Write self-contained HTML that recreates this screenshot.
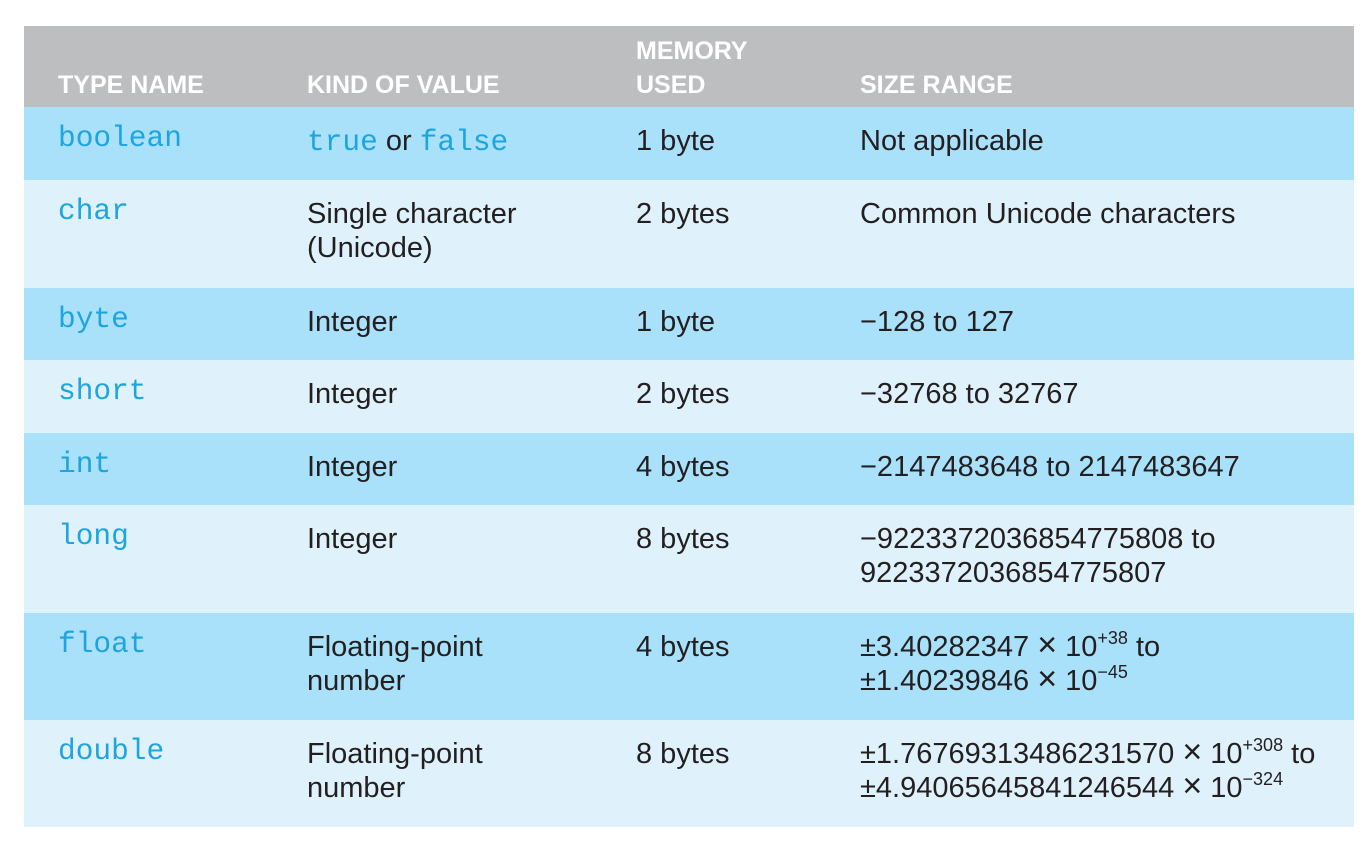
<!DOCTYPE html>
<html><head><meta charset="utf-8"><style>
body{margin:0;width:1368px;height:846px;background:#fff;position:relative;font-family:"Liberation Sans",sans-serif;color:#231f20;overflow:hidden}
.r{position:absolute;left:24px;width:1330px}
.c{position:absolute;font-size:29px;line-height:34px;white-space:nowrap}
.h{position:absolute;font-size:25px;font-weight:bold;color:#fff;line-height:34px}
.m{font-family:"Liberation Mono",monospace;color:#1ea5df;font-size:29.5px}
.cm{top:14px}
.t{top:17px}
.x{font-size:34px;line-height:0}
sup{font-size:18px;vertical-align:0;position:relative;top:-12px;line-height:0}
</style></head><body>
<div class="r" style="top:26px;height:81px;background:#bdbec0">
<div class="h" style="left:34px;top:42px">TYPE NAME</div>
<div class="h" style="left:283px;top:42px">KIND OF VALUE</div>
<div class="h" style="left:612px;top:8px">MEMORY<br>USED</div>
<div class="h" style="left:836px;top:42px">SIZE RANGE</div>
</div>

<div class="r" style="top:107px;height:73px;background:#a9e0fa">
<div class="c m cm" style="left:34px">boolean</div>
<div class="c" style="left:283px;top:17px"><span class="m">true</span> or <span class="m">false</span></div>
<div class="c t" style="left:612px">1 byte</div>
<div class="c t" style="left:836px">Not applicable</div>
</div>

<div class="r" style="top:180px;height:108px;background:#dff2fc">
<div class="c m cm" style="left:34px">char</div>
<div class="c t" style="left:283px">Single character<br>(Unicode)</div>
<div class="c t" style="left:612px">2 bytes</div>
<div class="c t" style="left:836px">Common Unicode characters</div>
</div>

<div class="r" style="top:288px;height:72px;background:#a9e0fa">
<div class="c m cm" style="left:34px">byte</div>
<div class="c t" style="left:283px">Integer</div>
<div class="c t" style="left:612px">1 byte</div>
<div class="c t" style="left:836px">&minus;128 to 127</div>
</div>

<div class="r" style="top:360px;height:73px;background:#dff2fc">
<div class="c m cm" style="left:34px">short</div>
<div class="c t" style="left:283px">Integer</div>
<div class="c t" style="left:612px">2 bytes</div>
<div class="c t" style="left:836px">&minus;32768 to 32767</div>
</div>

<div class="r" style="top:433px;height:72px;background:#a9e0fa">
<div class="c m cm" style="left:34px">int</div>
<div class="c t" style="left:283px">Integer</div>
<div class="c t" style="left:612px">4 bytes</div>
<div class="c t" style="left:836px">&minus;2147483648 to 2147483647</div>
</div>

<div class="r" style="top:505px;height:108px;background:#dff2fc">
<div class="c m cm" style="left:34px">long</div>
<div class="c t" style="left:283px">Integer</div>
<div class="c t" style="left:612px">8 bytes</div>
<div class="c t" style="left:836px">&minus;9223372036854775808 to<br>9223372036854775807</div>
</div>

<div class="r" style="top:613px;height:107px;background:#a9e0fa">
<div class="c m cm" style="left:34px">float</div>
<div class="c t" style="left:283px">Floating-point<br>number</div>
<div class="c t" style="left:612px">4 bytes</div>
<div class="c t" style="left:836px">&plusmn;3.40282347 <span class="x">&times;</span> 10<sup>+38</sup> to<br>&plusmn;1.40239846 <span class="x">&times;</span> 10<sup>&minus;45</sup></div>
</div>

<div class="r" style="top:720px;height:107px;background:#dff2fc">
<div class="c m cm" style="left:34px">double</div>
<div class="c t" style="left:283px">Floating-point<br>number</div>
<div class="c t" style="left:612px">8 bytes</div>
<div class="c t" style="left:836px">&plusmn;1.76769313486231570 <span class="x">&times;</span> 10<sup>+308</sup> to<br>&plusmn;4.94065645841246544 <span class="x">&times;</span> 10<sup>&minus;324</sup></div>
</div>
</body></html>
